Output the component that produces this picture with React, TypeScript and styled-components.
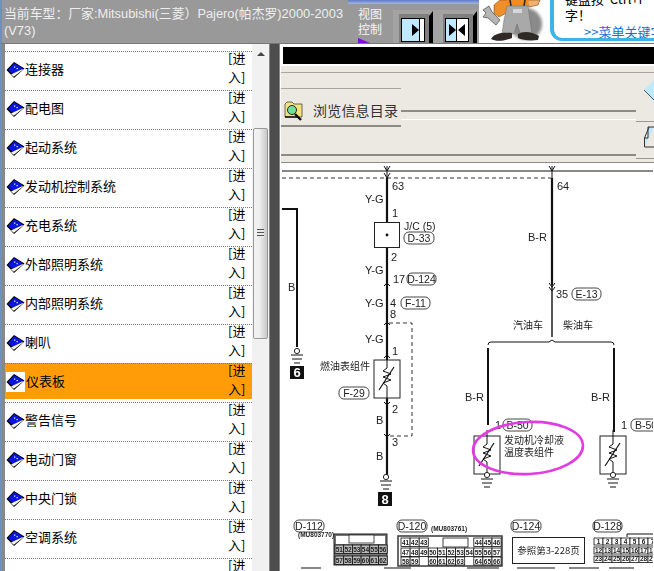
import React from "react";
import styled, { createGlobalStyle } from "styled-components";

const GlobalStyle = createGlobalStyle`
  html, body {
    margin: 0;
    padding: 0;
    background: #fff;
    overflow: hidden;
  }
  #root {
    width: 654px;
    height: 571px;
  }
`;

const cjk = `"Noto Sans CJK SC", "Liberation Sans", sans-serif`;

const Page = styled.div`
  width: 654px;
  height: 571px;
  display: flex;
  flex-direction: column;
  overflow: hidden;
  font-family: "Liberation Sans", "Noto Sans CJK SC", sans-serif;
`;

const Header = styled.header`
  height: 44px;
  flex: none;
  display: flex;
  background: #999;
  border-left: 2px solid #6f8fc0;
  border-bottom: 1px solid #777;
  box-sizing: border-box;
`;
const Title = styled.div`
  width: 346px;
  flex: none;
  padding: 5px 0 0 2px;
  box-sizing: border-box;
  font-size: 12.85px;
  line-height: 17px;
  color: #eeeeee;
`;
const ViewZone = styled.div`
  width: 131px;
  flex: none;
  display: flex;
  padding-top: 5px;
  box-sizing: border-box;
  background: linear-gradient(to bottom, #5f7cc4 0, #a4b6e4 4px, #999 4px);
`;
const ViewLabel = styled.div`
  width: 45px;
  flex: none;
  padding: 1px 0 0 10px;
  box-sizing: border-box;
  font-size: 12px;
  line-height: 15px;
  color: #f4f4f4;
  font-family: ${cjk};
`;
const Marker = styled.svg`
  display: block;
  margin-top: 2px;
`;
const ViewIcon = styled.svg`
  display: block;
  flex: none;
  margin-top: 5px;
`;
const Mascot = styled.svg`
  display: block;
  flex: none;
  background: #fff;
`;
const Bubble = styled.div`
  flex: 1;
  background: #fff;
  padding-left: 4px;
  min-width: 0;
`;
const BubbleBox = styled.div`
  height: 41px;
  width: 140px;
  box-sizing: border-box;
  padding: 0 0 0 11px;
  border-left: 4px solid #3cb4e6;
  border-bottom: 3px solid #3cb4e6;
  border-bottom-left-radius: 12px;
  font-size: 13px;
  line-height: 16px;
  color: #000;
  overflow: hidden;
  font-family: ${cjk};
`;
const BubbleText = styled.div`
  margin-top: -9px;
  white-space: nowrap;
`;
const BubbleLink = styled.div`
  margin-top: 1px;
  color: #1470d8;
  text-decoration: underline;
  white-space: nowrap;
  padding-left: 19px;
`;

const Body = styled.div`
  flex: 1;
  display: flex;
  min-height: 0;
`;
const Sidebar = styled.aside`
  width: 279px;
  flex: none;
  display: flex;
  background: #888;
  box-sizing: border-box;
  border-left: 2px solid #6f8fc0;
`;
const ListPanel = styled.div`
  width: 247px;
  flex: none;
  margin-left: 3px;
  padding-top: 7px;
  background: #fff;
  overflow: hidden;
  box-sizing: border-box;
`;
const Row = styled.div<{ $active?: boolean }>`
  height: 39px;
  box-sizing: border-box;
  display: flex;
  align-items: center;
  padding-left: 1px;
  border-top: 1px dotted #777;
  border-bottom: 3px solid #fff;
  background: ${(p) => (p.$active ? "#ff9c08" : "#fff")};
  font-family: ${cjk};
`;
const BookWrap = styled.span<{ $active?: boolean }>`
  width: 19px;
  height: 20px;
  flex: none;
  display: flex;
  align-items: center;
  justify-content: center;
  background: ${(p) => (p.$active ? "#fff" : "transparent")};
`;
const RowLabel = styled.span<{ $active?: boolean }>`
  flex: 1;
  font-size: 13px;
  color: #000;
  margin-top: -2px;
  padding-left: ${(p) => (p.$active ? "1px" : "0")};
`;
const Enter = styled.span`
  width: 24px;
  flex: none;
  font-size: 13px;
  line-height: 19px;
  color: #000;
  margin-top: -6px;
`;
const Scrollbar = styled.div`
  width: 17px;
  flex: none;
  background: #f1f1f1;
  display: flex;
  flex-direction: column;
  align-items: center;
`;
const ScrollUp = styled.div`
  height: 84px;
  flex: none;
  width: 100%;
  display: flex;
  justify-content: center;
  padding-top: 8px;
  box-sizing: border-box;
`;
const ScrollArrow = styled.div`
  width: 0;
  height: 0;
  border-left: 4px solid transparent;
  border-right: 4px solid transparent;
  border-bottom: 4px solid #444;
`;
const Thumb = styled.div`
  width: 15px;
  height: 211px;
  flex: none;
  box-sizing: border-box;
  border: 1px solid #999;
  border-radius: 2px;
  background: linear-gradient(to right, #f2f2f2 0%, #efefef 40%, #c8c8c8 100%);
  display: flex;
  align-items: center;
  justify-content: center;
`;
const Grip = styled.div`
  width: 7px;
  height: 9px;
  background: repeating-linear-gradient(to bottom, #555 0 1px, #e8e8e8 1px 3px);
`;
const Splitter = styled.div`
  width: 9px;
  flex: none;
  margin-left: 1px;
  background: #4d4d4d;
`;

const Content = styled.main`
  flex: 1;
  min-width: 0;
  display: flex;
  flex-direction: column;
  background: #fff;
  border-left: 1px solid #888;
  padding-left: 1px;
  box-sizing: border-box;
`;
const BlackBar = styled.div`
  height: 17px;
  flex: none;
  margin: 3px 0 2px 2px;
  background: #000;
`;
const Toolbar = styled.div`
  height: 91px;
  flex: none;
  box-sizing: border-box;
  display: flex;
  flex-direction: column;
  background: #ece9e2;
  border-top: 1px solid #a8a69f;
  margin-top: 6px;
  box-shadow: 0 -6px 0 #ece9e2;
  border-bottom: 1px solid #8d8b85;
  padding-bottom: 6px;
`;
const ToolRow = styled.div`
  flex: 1;
  display: flex;
  min-height: 0;
  border-bottom: 2px solid #8d8b85;
`;
const TabBlock = styled.div`
  width: 120px;
  height: 39px;
  flex: none;
  margin-top: 15px;
  box-sizing: border-box;
  border-top: 1px solid #a8a69f;
  border-bottom: 2px solid #8d8b85;
  display: flex;
  align-items: center;
  gap: 9px;
  padding: 6px 0 0 3px;
`;
const TabText = styled.span`
  font-family: ${cjk};
  font-size: 14px;
  letter-spacing: 0.2px;
  color: #333;
  white-space: nowrap;
`;
const Groove = styled.div`
  flex: 1;
  height: 7px;
  margin-top: 37px;
  border-top: 2px solid #8d8b85;
  border-bottom: 1px solid #fff;
`;
const SideTools = styled.div`
  width: 18px;
  flex: none;
  height: 86px;
  display: flex;
  flex-direction: column;
  position: relative;
  z-index: 1;
`;
const Sketch = styled.svg`
  display: block;
  flex: none;
  filter: blur(0.35px);
`;
const Wire = styled.path<{ $w?: number }>`
  fill: none;
  stroke: #111;
  stroke-width: ${(p) => p.$w ?? 1};
`;
const Dash = styled.path`
  fill: none;
  stroke: #333;
  stroke-width: 1;
  stroke-dasharray: 4 3;
`;
const Part = styled.rect`
  fill: #fff;
  stroke: #222;
  stroke-width: 1;
`;
const Lbl = styled.text<{ $s?: number }>`
  font-family: "Liberation Sans", sans-serif;
  font-size: ${(p) => p.$s ?? 11}px;
  fill: #222;
`;
const Zh = styled.text<{ $s?: number }>`
  font-family: "Noto Sans CJK SC", sans-serif;
  font-size: ${(p) => p.$s ?? 10}px;
  fill: #222;
`;

const items = [
  "连接器",
  "配电图",
  "起动系统",
  "发动机控制系统",
  "充电系统",
  "外部照明系统",
  "内部照明系统",
  "喇叭",
  "仪表板",
  "警告信号",
  "电动门窗",
  "中央门锁",
  "空调系统",
  "",
];

function BookIcon() {
  return (
    <svg width="19" height="18" viewBox="0 0 19 18">
      <path d="M0.5 9 L8 1 L18.5 7.5 L8 17 Z" fill="#000" />
      <path d="M2 9 L8.2 2.2 L17 7.2 L7.5 13.5 Z" fill="#0a14e0" />
      <path d="M5 13.6 L16.5 8 L17 8.6 L7.8 15.8 Z" fill="#f6f6ea" />
      <path d="M8 5.5h1.3v1.3H8zM10.5 7h1.3v1.3h-1.3z" fill="#e4e8ff" />
    </svg>
  );
}

function ViewButton({ split, width }: { split?: boolean; width: number }) {
  return (
    <ViewIcon width={width} height="33" viewBox={`0 0 ${width} 33`}>
      <rect width={width} height="33" fill="#a3a3a3" />
      <rect x="6" y="4" width="30" height="29" fill="#7f7f7f" />
      <path d={`M36 6 L40 1 V33 H36 Z`} fill="#000" />
      <rect x="8.5" y="8.5" width="23" height="23" fill="#bfe9ff" stroke="#000" />
      {split ? (
        <>
          <rect x="20" y="9" width="11" height="22" fill="#fff" />
          <path d="M19.5 9v22" stroke="#000" />
          <path d="M12 14 L19 20 L12 26 Z M28 14 L21 20 L28 26 Z" fill="#000" />
        </>
      ) : (
        <>
          <rect x="27" y="9" width="4" height="22" fill="#fff" />
          <path d="M26.5 9v22" stroke="#000" />
          <path d="M19 14 L26 20 L19 26 Z" fill="#000" />
        </>
      )}
    </ViewIcon>
  );
}

function MascotArt() {
  return (
    <Mascot width="67" height="43" viewBox="479 0 67 43">
      <defs>
        <filter id="soft">
          <feGaussianBlur stdDeviation="1.8" />
        </filter>
      </defs>
      <ellipse cx="526" cy="24" rx="16" ry="16" fill="#8a8a8a" filter="url(#soft)" />
      <path d="M483 10 L489 6 L492 12 L500 20 L496 25 L488 18 L483 17 L486 13 Z" fill="#b5b5b5" stroke="#444" strokeWidth="0.7" />
      <path d="M494 5 L500 0 H510 L508 12 L499 17 L494 13 Z" fill="#ef8f2a" stroke="#7a4a14" strokeWidth="0.6" />
      <path d="M526 0 H540 L538 5 L529 7 Z" fill="#f0b070" stroke="#7a4a14" strokeWidth="0.6" />
      <path d="M507 0 H529 L528 6 H508 Z" fill="#f08c24" />
      <path d="M510 0 L511 6 M525 0 L524 6" stroke="#222" strokeWidth="1.5" />
      <path d="M507 6 H528 L530 20 L532 33 H520 L517 24 L514 34 H502 L504 20 Z" fill="#a9a9a9" stroke="#6a6a6a" strokeWidth="0.5" />
      <rect x="513" y="9" width="9" height="4" fill="#d8d8d8" />
      <path d="M491 39 C494 33 503 32 512 33 L512 38 C505 41 496 42 491 39 Z" fill="#2f2a26" />
      <path d="M518 34 C523 31 531 31 539 36 L538 40 C530 41 522 40 518 38 Z" fill="#2f2a26" />
    </Mascot>
  );
}

function Tag({ x, y, w, t }: { x: number; y: number; w: number; t: string }) {
  return (
    <g>
      <rect x={x} y={y - 6} width={w} height="12" rx="5" fill="#fff" stroke="#333" strokeWidth="0.9" />
      <Lbl x={x + w / 2} y={y + 4} textAnchor="middle" $s={10.5}>
        {t}
      </Lbl>
    </g>
  );
}

function Resistor({ x, y }: { x: number; y: number }) {
  return (
    <g>
      <Part x={x} y={y} width="26" height="38" />
      <Wire d={`M${x + 13} ${y - 6} V${y + 8} l-4 3 l8 3 l-8 3 l8 3 l-8 3 l4 3 V${y + 38}`} $w={1} />
      <Wire d={`M${x + 5} ${y + 30} L${x + 20} ${y + 7}`} $w={1.2} />
    </g>
  );
}

function Ground({ x, y }: { x: number; y: number }) {
  return (
    <g>
      <circle cx={x} cy={y} r="2.6" fill="#fff" stroke="#222" />
      <Wire d={`M${x - 6} ${y + 4}h12 M${x - 5} ${y + 8}h10 M${x - 3} ${y + 12}h6`} />
    </g>
  );
}

function Cells({ xs, y, h, w, cols, dark }: { xs: number[]; y: number; h: number; w: number; cols: (number | null)[]; dark?: boolean }) {
  return (
    <g>
      {cols.map((c, i) =>
        c === null ? null : (
          <g key={i}>
            <rect x={xs[i]} y={y} width={w} height={h} fill={dark ? "#bbb" : "#fff"} stroke="#111" strokeWidth="0.8" />
            <Lbl x={xs[i] + w / 2} y={y + h - 1.5} textAnchor="middle" $s={6.5} fontWeight="bold">
              {c}
            </Lbl>
          </g>
        )
      )}
    </g>
  );
}

const range = (n: number, start: number, step: number) => Array.from({ length: n }, (_, i) => start + i * step);

function Diagram() {
  const x112 = range(6, 336, 8.7);
  const x120 = range(11, 402, 9.1);
  const x128 = range(7, 595, 9);
  return (
    <Sketch width="372" height="408" viewBox="282 163 372 408">
      <rect x="282" y="163" width="372" height="408" fill="#fff" />
      <Wire d="M283 171 H654" />
      <Dash d="M283 178 H552" />
      <Wire d="M385 166 L388 171 L391 166 M388 166 V178 M385 173 L388 178 L391 173" />
      <Wire d="M550 166 L553 171 L556 166 M553 166 V178" />

      {/* left wire */}
      <Wire d="M283 209 H298 V347" $w={2} />
      <Lbl x="289" y="291">B</Lbl>
      <Ground x={298} y={351} />
      <rect x="291" y="366" width="14" height="13" fill="#111" />
      <Lbl x="298" y="377" textAnchor="middle" $s={13} fontWeight="bold" style={{ fill: "#fff" }}>6</Lbl>

      {/* fuel gauge branch */}
      <Wire d="M388 178 V222 M388 247 V360 M388 398 V475" $w={2.2} />
      <Lbl x="393" y="190">63</Lbl>
      <Lbl x="366" y="203">Y-G</Lbl>
      <Lbl x="393" y="217">1</Lbl>
      <Part x="375.5" y="222.5" width="25" height="25" />
      <circle cx="388" cy="235" r="1.4" fill="#111" />
      <Lbl x="405" y="230" $s={10.5}>J/C (5)</Lbl>
      <Tag x={405} y={238} w={30} t="D-33" />
      <Lbl x="392" y="261">2</Lbl>
      <Lbl x="366" y="274">Y-G</Lbl>
      <Lbl x="394" y="283">17</Lbl>
      <Tag x={408} y={279} w={29} t="D-124" />
      <Lbl x="366" y="307">Y-G</Lbl>
      <Lbl x="391" y="307">4</Lbl>
      <Tag x={402} y={303} w={29} t="F-11" />
      <Lbl x="391" y="318">8</Lbl>
      <Dash d="M390 323 H413 V436 H390" />
      <Lbl x="366" y="343">Y-G</Lbl>
      <Lbl x="393" y="355">1</Lbl>
      <Wire d="M385 286 L388 283 L391 286 M385 325 L388 322 L391 325 M385 358 L388 355 L391 358 M385 402 L388 405 L391 402 M385 434 L388 437 L391 434" />
      <Zh x="321" y="370">燃油表组件</Zh>
      <Resistor x={375} y={360} />
      <Tag x={340} y={393} w={30} t="F-29" />
      <Lbl x="393" y="413">2</Lbl>
      <Lbl x="377" y="424">B</Lbl>
      <Lbl x="393" y="446">3</Lbl>
      <Lbl x="377" y="460">B</Lbl>
      <Ground x={387} y={477} />
      <rect x="379" y="492" width="14" height="14" fill="#111" />
      <Lbl x="386" y="504" textAnchor="middle" $s={13} fontWeight="bold" style={{ fill: "#fff" }}>8</Lbl>

      {/* coolant gauge branch */}
      <Wire d="M553 178 V285" $w={2.2} />
      <Wire d="M553 285 V337" $w={1.4} />
      <Lbl x="558" y="190">64</Lbl>
      <Lbl x="529" y="241">B-R</Lbl>
      <Wire d="M550 283 L553 287 L556 283 M550 287 L553 291 L556 287" />
      <Lbl x="557" y="298">35</Lbl>
      <Tag x={573} y={294} w={29} t="E-13" />
      <Zh x="514" y="329">汽油车</Zh>
      <Zh x="564" y="329">柴油车</Zh>
      <Wire d="M489 345 Q489 342 492 342 H550 L553 340 L556 342 H612 Q615 342 615 345" />
      <Wire d="M489 348 V425 M615 348 V432" $w={2} />
      <Lbl x="466" y="401">B-R</Lbl>
      <Lbl x="592" y="401">B-R</Lbl>
      <Lbl x="496" y="429">1</Lbl>
      <Tag x={504} y={425} w={29} t="B-50" />
      <Lbl x="622" y="429">1</Lbl>
      <Tag x={632} y={425} w={30} t="B-50" />
      <Resistor x={475} y={436} />
      <Resistor x={601} y={436} />
      <Ground x={488} y={475} />
      <Ground x={614} y={475} />
      <Zh x="505" y="444">发动机冷却液</Zh>
      <Zh x="505" y="456">温度表组件</Zh>
      <ellipse cx="529" cy="448" rx="55" ry="26" fill="none" stroke="#e23be2" strokeWidth="2.6" transform="rotate(-3 529 448)" />

      {/* connectors */}
      <Tag x={295} y={526} w={30} t="D-112" />
      <Lbl x="299" y="537" $s={6.5} fontWeight="bold">(MU803770)</Lbl>
      <rect x="335" y="534" width="53" height="31" fill="#777" stroke="#222" />
      <rect x="337" y="536" width="49" height="8" fill="#fff" />
      <rect x="350" y="535" width="25" height="8" fill="#fff" stroke="#222" strokeWidth="0.8" />
      <Cells xs={x112} y={545} h={8.5} w={8.7} cols={[51, 52, 53, 54, 55, 56]} dark />
      <Cells xs={x112} y={556} h={8.5} w={8.7} cols={[57, 58, 59, 60, 61, 62]} dark />

      <Tag x={398} y={526} w={30} t="D-120" />
      <Lbl x="432" y="531" $s={6.5} fontWeight="bold">(MU803761)</Lbl>
      <rect x="399" y="536" width="104" height="30" fill="#fff" stroke="#444" strokeWidth="1.6" />
      <Cells xs={x120} y={538} h={8.5} w={9.1} cols={[41, 42, 43, null, null, null, null, null, 44, 45, 46]} />
      <rect x="444" y="538" width="25" height="9" fill="#fff" stroke="#111" strokeWidth="0.8" />
      <Cells xs={x120} y={548} h={8.5} w={9.1} cols={[47, 48, 49, 50, 51, 52, 53, 54, 55, 56, 57]} />
      <Cells xs={x120} y={557} h={8} w={9.1} cols={[58, 59, null, 60, 61, 62, 63, null, 64, 65, 66]} />

      <Tag x={512} y={526} w={30} t="D-124" />
      <rect x="513.5" y="537.5" width="72" height="26" fill="#fff" stroke="#222" />
      <Zh x="549.5" y="554" textAnchor="middle" $s={9.5}>参照第3-228页</Zh>

      <Tag x={594} y={526} w={29} t="D-128" />
      <Wire d="M628 537 V534 H654" />
      <Cells xs={x128} y={538} h={7} w={9} cols={[1, 2, 3, 4, 5, 6, 7]} />
      <Cells xs={x128} y={547} h={7} w={9} cols={[12, 13, 14, 15, 16, 17, 18]} />
      <Cells xs={x128} y={556} h={6.5} w={9} cols={[23, 24, 25, 26, 27, 28, 29]} />

      <Wire d="M302 568 H322 M385 568 H412 M468 568 H500 M518 568 H556 M570 568 H600 M610 568 H635" $w={1.2} />
    </Sketch>
  );
}

export default function App() {
  return (
    <>
      <GlobalStyle />
      <Page>
        <Header>
          <Title>当前车型：厂家:Mitsubishi(三菱）Pajero(帕杰罗)2000-2003 (V73)</Title>
          <ViewZone>
            <ViewLabel>
              视图
              <br />
              控制
              <Marker width="12" height="5" viewBox="0 0 12 5">
                <path d="M0 0 L12 5 H0 Z" fill="#7a10e0" />
              </Marker>
            </ViewLabel>
            <ViewButton width={44} />
            <ViewButton width={42} split />
          </ViewZone>
          <MascotArt />
          <Bubble>
            <BubbleBox>
              <BubbleText>键盘按 &nbsp;Ctrl+I</BubbleText>
              <div>字！</div>
              <BubbleLink>&gt;&gt;菜单关键字</BubbleLink>
            </BubbleBox>
          </Bubble>
        </Header>
        <Body>
          <Sidebar>
            <ListPanel>
              {items.map((name, i) => {
                const active = name === "仪表板";
                return (
                  <Row key={i} $active={active}>
                    <BookWrap $active={active}>{name && <BookIcon />}</BookWrap>
                    <RowLabel $active={active}>{name}</RowLabel>
                    <Enter>
                      [进
                      <br />
                      入]
                    </Enter>
                  </Row>
                );
              })}
            </ListPanel>
            <Scrollbar>
              <ScrollUp>
                <ScrollArrow />
              </ScrollUp>
              <Thumb>
                <Grip />
              </Thumb>
            </Scrollbar>
            <Splitter />
          </Sidebar>
          <Content>
            <BlackBar />
            <Toolbar>
              <ToolRow>
                <TabBlock>
                  <svg width="20" height="21" viewBox="0 0 20 21">
                    <path d="M1 4 L3 2 H8 L10 4 H18 V17 H1 Z" fill="#f4e37a" stroke="#444" strokeWidth="0.8" />
                    <circle cx="8" cy="10" r="4.5" fill="#6fe0a0" stroke="#222" />
                    <path d="M11 14 L17 20" stroke="#111" strokeWidth="2.4" />
                    <path d="M1 17 H14" stroke="#111" strokeWidth="1.5" />
                  </svg>
                  <TabText>浏览信息目录</TabText>
                </TabBlock>
                <Groove />
                <SideTools>
                  <svg width="18" height="48" viewBox="0 0 18 48">
                    <path d="M18 7 L8 17 L18 29 Z" fill="#bfe9ff" />
                    <path d="M8 17 L18 27" stroke="#333" strokeWidth="0.8" />
                  </svg>
                  <svg width="18" height="38" viewBox="0 0 18 38">
                    <rect width="18" height="38" fill="#ece9e2" />
                    <path d="M0 0.5 H18 M0 37.5 H18" stroke="#9a9892" />
                    <path d="M8.5 26 V17 H12 V6 L18 6 M8.5 17 L13 6 M12 26 H18 M8.5 26 H12" fill="#bfe9ff" stroke="#333" />
                  </svg>
                </SideTools>
              </ToolRow>
            </Toolbar>
            <Diagram />
          </Content>
        </Body>
      </Page>
    </>
  );
}
